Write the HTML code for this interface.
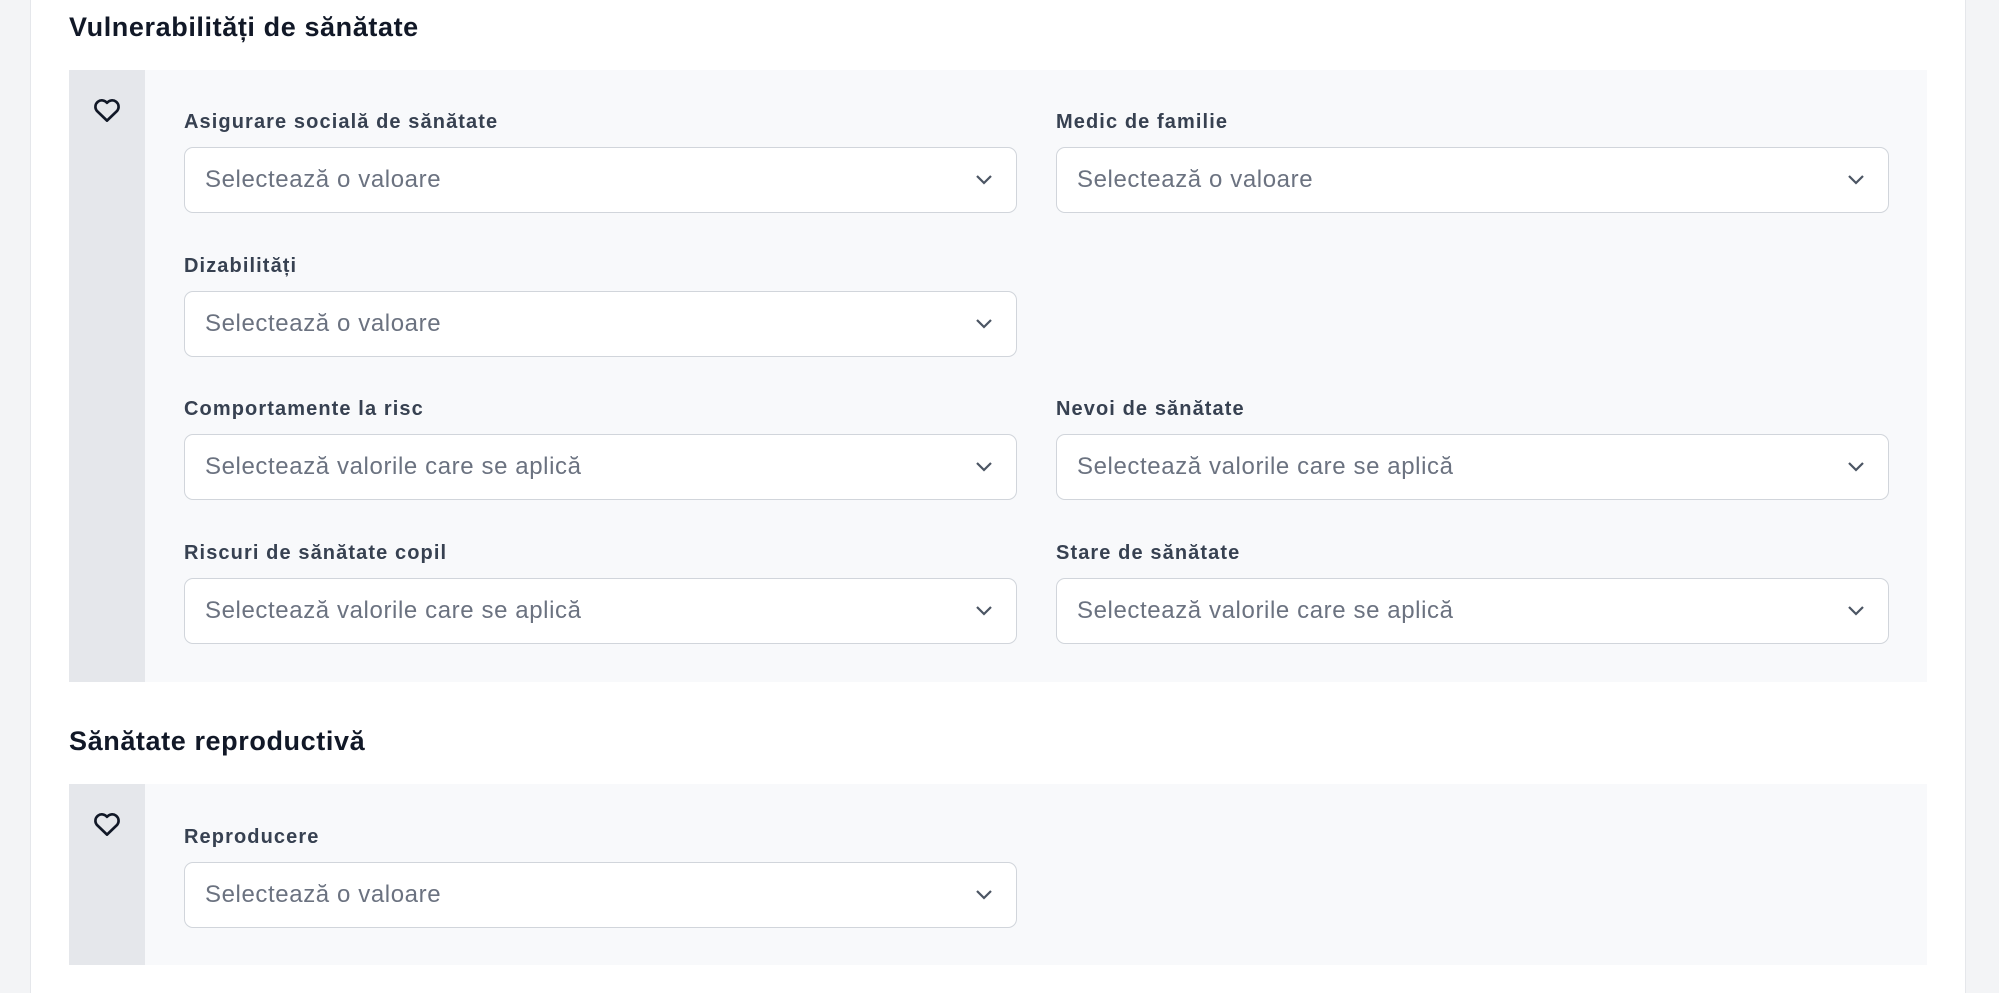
<!DOCTYPE html>
<html><head><meta charset="utf-8"><style>
*{box-sizing:border-box;margin:0;padding:0}
body{width:1999px;height:993px;background:#f3f4f6;font-family:"Liberation Sans",Arial,sans-serif;position:relative;overflow:hidden}
.card{position:absolute;left:30px;top:0;width:1936px;height:993px;background:#fff;border-left:1px solid #e5e7eb;border-right:1px solid #e5e7eb}
h2{position:absolute;left:69px;font-size:27px;font-weight:600;color:#111827;letter-spacing:0.6px}
.panel{position:absolute;left:69px;width:1858px;background:#f8f9fb}
.side{position:absolute;left:0;top:0;bottom:0;width:76px;background:#e5e7eb}
.side svg{position:absolute;left:21px;top:25px}
.lbl{position:absolute;font-size:20px;font-weight:600;color:#374151;letter-spacing:1.1px}
.sel{position:absolute;width:833px;height:66px;background:#fff;border:1.5px solid #d1d5db;border-radius:9px;font-size:24px;color:#6b7280;padding-left:20px;line-height:63px;letter-spacing:0.6px}
.sel svg{position:absolute;right:22px;top:24px}
</style></head><body>
<div class="card"></div>
<h2 style="top:12px">Vulnerabilități de sănătate</h2>
<div class="panel" style="top:70px;height:612px">
<div class="side"><svg width="34" height="30" viewBox="0 0 24 24" fill="none" stroke="#111827" stroke-width="2.1" stroke-linejoin="round"><path d="M12 20.5 3.8 12.6A5 5 0 0 1 12 6.3a5 5 0 0 1 8.2 6.3Z"/></svg></div>
</div>
<div class="panel" style="top:784px;height:181px">
<div class="side"><svg width="34" height="30" viewBox="0 0 24 24" fill="none" stroke="#111827" stroke-width="2.1" stroke-linejoin="round"><path d="M12 20.5 3.8 12.6A5 5 0 0 1 12 6.3a5 5 0 0 1 8.2 6.3Z"/></svg></div>
</div>

<div class="lbl" style="left:184px;top:111px">Asigurare socială de sănătate</div>
<div class="sel" style="left:184px;top:147px">Selectează o valoare<svg width="20" height="14" viewBox="0 0 20 14"><path d="M3 4l7 7 7-7" fill="none" stroke="#4b5563" stroke-width="2.2"/></svg></div>
<div class="lbl" style="left:1056px;top:111px">Medic de familie</div>
<div class="sel" style="left:1056px;top:147px">Selectează o valoare<svg width="20" height="14" viewBox="0 0 20 14"><path d="M3 4l7 7 7-7" fill="none" stroke="#4b5563" stroke-width="2.2"/></svg></div>

<div class="lbl" style="left:184px;top:255px">Dizabilități</div>
<div class="sel" style="left:184px;top:291px">Selectează o valoare<svg width="20" height="14" viewBox="0 0 20 14"><path d="M3 4l7 7 7-7" fill="none" stroke="#4b5563" stroke-width="2.2"/></svg></div>

<div class="lbl" style="left:184px;top:398px">Comportamente la risc</div>
<div class="sel" style="left:184px;top:434px">Selectează valorile care se aplică<svg width="20" height="14" viewBox="0 0 20 14"><path d="M3 4l7 7 7-7" fill="none" stroke="#4b5563" stroke-width="2.2"/></svg></div>
<div class="lbl" style="left:1056px;top:398px">Nevoi de sănătate</div>
<div class="sel" style="left:1056px;top:434px">Selectează valorile care se aplică<svg width="20" height="14" viewBox="0 0 20 14"><path d="M3 4l7 7 7-7" fill="none" stroke="#4b5563" stroke-width="2.2"/></svg></div>

<div class="lbl" style="left:184px;top:542px">Riscuri de sănătate copil</div>
<div class="sel" style="left:184px;top:578px">Selectează valorile care se aplică<svg width="20" height="14" viewBox="0 0 20 14"><path d="M3 4l7 7 7-7" fill="none" stroke="#4b5563" stroke-width="2.2"/></svg></div>
<div class="lbl" style="left:1056px;top:542px">Stare de sănătate</div>
<div class="sel" style="left:1056px;top:578px">Selectează valorile care se aplică<svg width="20" height="14" viewBox="0 0 20 14"><path d="M3 4l7 7 7-7" fill="none" stroke="#4b5563" stroke-width="2.2"/></svg></div>

<h2 style="top:726px">Sănătate reproductivă</h2>
<div class="lbl" style="left:184px;top:826px">Reproducere</div>
<div class="sel" style="left:184px;top:862px">Selectează o valoare<svg width="20" height="14" viewBox="0 0 20 14"><path d="M3 4l7 7 7-7" fill="none" stroke="#4b5563" stroke-width="2.2"/></svg></div>
</body></html>
